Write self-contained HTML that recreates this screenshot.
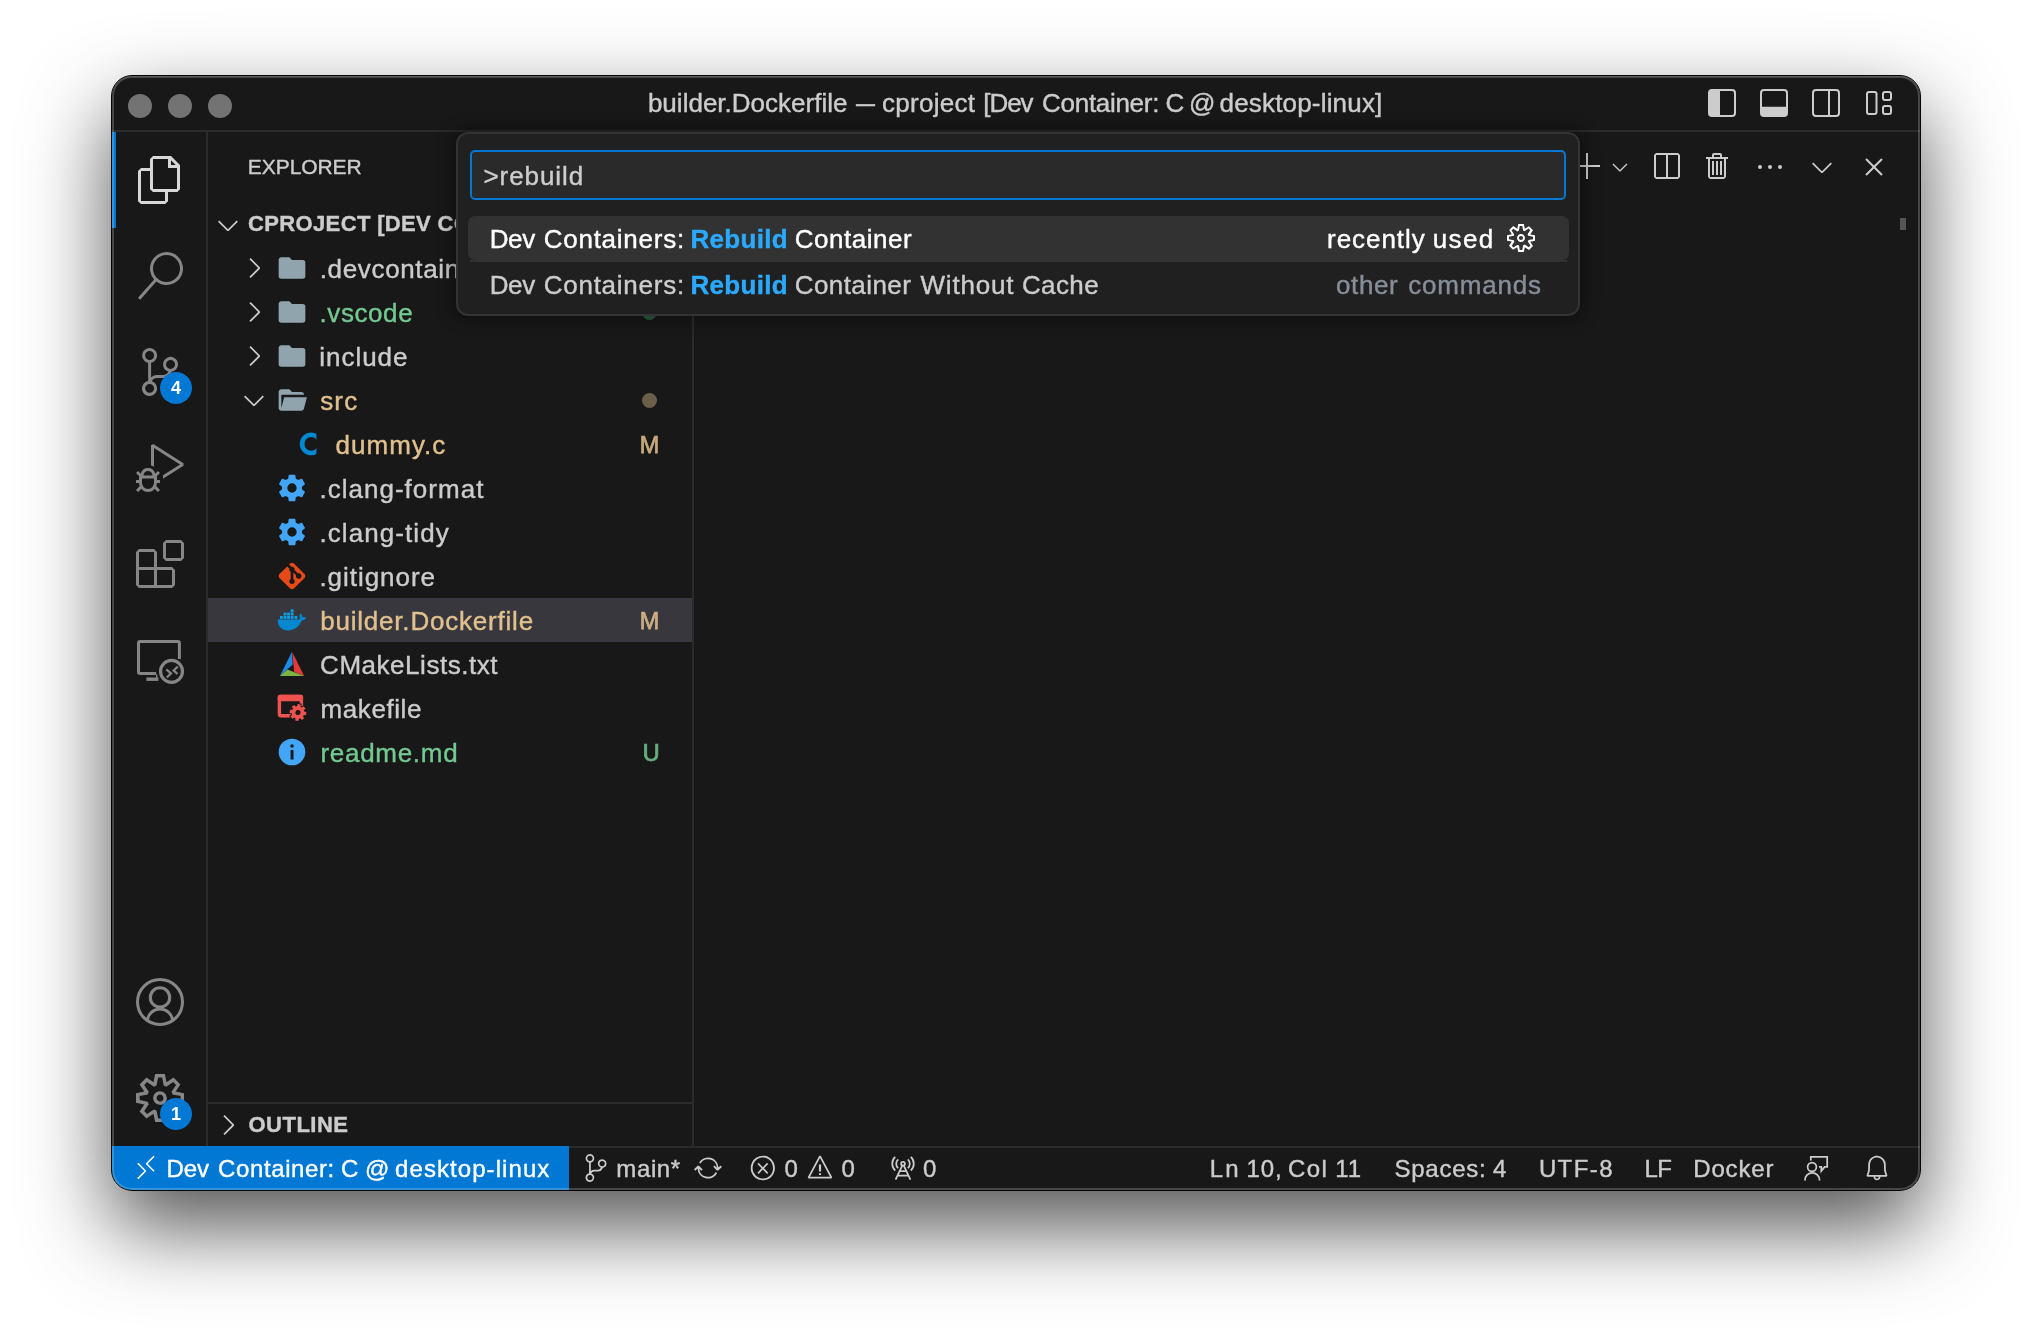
<!DOCTYPE html>
<html lang="en">
<head>
<meta charset="utf-8">
<title>builder.Dockerfile — cproject [Dev Container: C @ desktop-linux]</title>
<style>
html,body{margin:0;padding:0;background:#fff;}
body{width:2032px;height:1338px;position:relative;overflow:hidden;font-family:"Liberation Sans",sans-serif;color:#ccc;-webkit-font-smoothing:antialiased;}
.abs{position:absolute;}
#shadow{position:absolute;left:111px;top:75px;width:1810px;height:1116px;border-radius:21px;
 box-shadow:0 36px 84px rgba(0,0,0,.68);}
#clip{position:absolute;left:112px;top:76px;width:1808px;height:1114px;border-radius:20px;overflow:hidden;background:#181818;}
#page{position:absolute;left:-112px;top:-76px;width:2032px;height:1338px;will-change:transform;}
#frame{position:absolute;left:111px;top:75px;width:1808px;height:1114px;border-radius:21px;border:1px solid #050505;
 box-shadow:inset 0 0 0 2px rgba(255,255,255,.2),inset 0 1px 0 0 rgba(255,255,255,.12);pointer-events:none;}
svg{position:absolute;display:block;overflow:visible;}
.t{position:absolute;white-space:pre;line-height:44px;height:44px;-webkit-text-stroke:.4px;}
/* title bar */
#titlebar{left:112px;top:76px;width:1808px;height:54px;border-bottom:2px solid #2b2b2b;background:#181818;}
.tl{position:absolute;top:94px;width:24px;height:24px;border-radius:50%;background:#737373;}
.tt{top:81px;font-size:26px;color:#ccc;}
/* activity bar */
#actbar{left:112px;top:132px;width:94px;height:1014px;border-right:2px solid #2b2b2b;}
.badge{position:absolute;width:32px;height:32px;border-radius:50%;background:#0078d4;color:#fff;font-weight:700;font-size:18px;line-height:32px;text-align:center;}
/* sidebar */
#sidebar{left:208px;top:132px;width:484px;height:1014px;border-right:2px solid #2b2b2b;}
.row{position:absolute;left:208px;width:484px;height:44px;}
.lbl{font-size:26px;letter-spacing:.55px;margin-top:1px;}
.mod{color:#e2c08d;}
.unt{color:#73c991;}
.dec{position:absolute;font-size:23.4px;line-height:44px;height:44px;width:40px;left:629.600px;text-align:center;margin-top:.8px;-webkit-text-stroke:.75px;opacity:.86;}
.dot{position:absolute;left:642px;width:15px;height:15px;border-radius:50%;}
/* status bar */
#status{left:112px;top:1146px;width:1808px;height:42px;border-top:2px solid #2b2b2b;background:#181818;}
.st{font-size:24px;color:#ccc;top:1146.600px;}
/* quick input */
#qi{left:456px;top:132px;width:1120px;height:180px;border:2px solid #333;border-radius:12px;background:#202020;box-shadow:0 0 16px 4px rgba(0,0,0,.36);}
#qin{left:470px;top:150px;width:1092px;height:46px;border:2px solid #0078d4;border-radius:5px;background:#2a2a2a;}
.q{font-size:26px;}
.hl{color:#2aaaff;font-weight:700;}
</style>
</head>
<body>
<div id="shadow"></div>
<div id="clip"><div id="page">

<!-- TITLE BAR -->
<div id="titlebar" class="abs"></div>
<div class="tl" style="left:128px"></div><div class="tl" style="left:168px"></div><div class="tl" style="left:208px"></div>
<div class="t tt" id="title_1" style="left:647.9px;letter-spacing:0.013px">builder.Dockerfile</div>
<div class="t tt" id="title_2" style="left:856.300px;transform:scaleX(.73);transform-origin:0 0">—</div>
<div class="t tt" id="title_3" style="left:882.1px;letter-spacing:0.272px">cproject</div>
<div class="t tt" id="title_4" style="left:983.3px;letter-spacing:-1.066px">[Dev</div>
<div class="t tt" id="title_5" style="left:1042.1px;letter-spacing:-0.3px">Container:</div>
<div class="t tt" id="title_6" style="left:1165.6px">C</div>
<div class="t tt" id="title_7" style="left:1189.1px;letter-spacing:0px">@</div>
<div class="t tt" id="title_8" style="left:1219.5px;letter-spacing:0.185px">desktop-linux]</div>

<!-- ACTIVITY BAR -->
<div id="actbar" class="abs"></div>
<div class="abs" style="left:112px;top:132px;width:4px;height:96px;background:#0078d4"></div>


<!-- activity icons -->
<svg style="left:136px;top:156px" width="48" height="48" viewBox="0 0 24 24" fill="#d7d7d7"><path d="M17.5 0h-9L7 1.5V6H2.5L1 7.5v15.07L2.5 24h12.07L16 22.57V18h4.7l1.3-1.43V4.5L17.5 0zm0 2.12l2.38 2.38H17.5V2.12zm-3 20.38h-12v-15H7v9.07L8.5 18h6v4.5zm6-6h-12v-15H16V6h4.5v10.5z"/></svg>
<svg style="left:136px;top:252px" width="48" height="48" viewBox="0 0 24 24" fill="#868686"><path d="M15.25 0a8.25 8.25 0 0 0-6.18 13.72L1 22.88l1.12 1 8.05-9.12A8.251 8.251 0 1 0 15.25.01V0zm0 15a6.75 6.75 0 1 1 0-13.5 6.75 6.75 0 0 1 0 13.5z"/></svg>
<svg style="left:136px;top:348px" width="48" height="48" viewBox="0 0 24 24" fill="#868686"><path d="M21.007 8.222A3.738 3.738 0 0 0 15.045 5.2a3.737 3.737 0 0 0 1.156 6.583 2.988 2.988 0 0 1-2.668 1.67h-2.99a4.456 4.456 0 0 0-2.989 1.165V7.4a3.737 3.737 0 1 0-1.494 0v9.117a3.776 3.776 0 1 0 1.816.099 2.99 2.99 0 0 1 2.668-1.667h2.99a4.484 4.484 0 0 0 4.223-3.039 3.736 3.736 0 0 0 3.25-3.687zM4.565 3.738a2.242 2.242 0 1 1 4.484 0 2.242 2.242 0 0 1-4.484 0zm4.484 16.441a2.242 2.242 0 1 1-4.484 0 2.242 2.242 0 0 1 4.484 0zm8.221-9.715a2.242 2.242 0 1 1 0-4.485 2.242 2.242 0 0 1 0 4.485z"/></svg>
<div class="badge" style="left:160px;top:372px">4</div>
<svg style="left:136px;top:444px" width="48" height="48" viewBox="0 0 24 24" fill="#868686"><path d="M10.94 13.5l-1.32 1.32a3.73 3.73 0 0 0-7.24 0L1.06 13.5 0 14.56l1.72 1.72-.22.22V18H0v1.5h1.5v.08c.077.489.214.966.41 1.42L0 22.94 1.06 24l1.65-1.65A4.308 4.308 0 0 0 6 24a4.31 4.31 0 0 0 3.29-1.65L10.94 24 12 22.94 10.09 21c.198-.464.336-.951.41-1.45v-.1H12V18h-1.5v-1.5l-.22-.22L12 14.56l-1.06-1.06zM6 13.5a2.25 2.25 0 0 1 2.25 2.25h-4.5A2.25 2.25 0 0 1 6 13.5zm3 6a3.33 3.33 0 0 1-3 3 3.33 3.33 0 0 1-3-3v-2.25h6v2.25zm14.76-9.9v1.26L13.5 17.37V15.6l8.5-5.37L9 2v9.46a5.07 5.07 0 0 0-1.5-.72V.63L8.64 0l15.12 9.6z"/></svg>
<svg style="left:136px;top:540px" width="48" height="48" viewBox="0 0 24 24" fill="#868686"><path d="M13.5 1.5L15 0h7.5L24 1.5V9l-1.5 1.5H15L13.5 9V1.5zm1.5 0V9h7.5V1.5H15zM0 15V6l1.5-1.5H9L10.5 6v7.5H18l1.5 1.5v7.5L18 24H1.5L0 22.5V15zm9-1.5V6H1.5v7.5H9zM9 15H1.5v7.5H9V15zm1.5 7.5H18V15h-7.5v7.5z"/></svg>
<svg id="ic-remote" style="left:136px;top:636px" width="48" height="48" viewBox="0 0 48 48" fill="none" stroke="#868686" stroke-width="3"><path d="M43.400 23V6.900a1.500 1.500 0 0 0-1.500-1.500H4a1.500 1.500 0 0 0-1.500 1.500V35.900a1.500 1.500 0 0 0 1.500 1.500H20.100"/><path d="M10.400 43.200H22.400" stroke-width="3.400"/><path d="M20.700 38.500V42" stroke-width="1.400"/><circle cx="35.500" cy="35.400" r="10.950" stroke-width="3.200"/><path d="M30.300 33.400L35 37.400L30.800 41.500M41.800 30.600L37.600 34.500L41.500 37.900" stroke-width="2.200"/></svg>
<svg id="ic-account" style="left:136px;top:978px" width="48" height="48" viewBox="0 0 48 48" fill="none" stroke="#868686" stroke-width="3"><circle cx="24" cy="24" r="22.500"/><circle cx="24" cy="19.400" r="9.700" stroke-width="3.100"/><path d="M11.340 42.600A12.700 12.700 0 0 1 36.660 42.600"/></svg>
<svg style="left:136px;top:1074px" width="48" height="48" viewBox="0 0 24 24" fill="#868686"><path fill-rule="evenodd" d="M19.85 8.750l4.150.830v4.840l-4.150.830 2.350 3.520-3.430 3.430-3.520-2.350-.830 4.150H9.580l-.830-4.150-3.520 2.350-3.430-3.430 2.350-3.520L0 14.420V9.580l4.150-.830L1.800 5.230 5.230 1.800l3.520 2.350L9.580 0h4.840l.830 4.150 3.520-2.350 3.430 3.430-2.350 3.520zm-1.570 5.070l4-.810v-2l-4-.810-.540-1.300 2.290-3.430-1.430-1.430-3.430 2.290-1.300-.540-.810-4h-2l-.810 4-1.300.540-3.430-2.290-1.430 1.430L6.380 8.900l-.540 1.300-4 .810v2l4 .810.540 1.300-2.290 3.430 1.430 1.430 3.430-2.290 1.300.540.810 4h2l.810-4 1.300-.540 3.430 2.290 1.430-1.430-2.290-3.430.540-1.300zm-8.186-4.672A3.430 3.430 0 0 1 12 8.570 3.440 3.440 0 0 1 15.430 12a3.430 3.430 0 1 1-5.336-2.852zm.956 4.274c.281.188.612.288.950.288A1.700 1.700 0 0 0 13.710 12a1.710 1.710 0 1 0-2.660 1.422z"/></svg>
<div class="badge" style="left:160px;top:1098px">1</div>

<!-- SIDEBAR -->
<div id="sidebar" class="abs"></div>
<!--SB-->
<div class="t" id="explorer" style="left:247.8px;top:145px;font-size:21px;letter-spacing:-0.064px;color:#ccc">EXPLORER</div>
<svg style="left:212px;top:209px" width="32" height="32" viewBox="0 0 16 16" fill="#ccc"><path d="M7.976 10.072l4.357-4.357.62.618L8.284 11h-.618L3 6.333l.619-.618 4.357 4.357z"/></svg>
<div class="t" id="cproject" style="left:248px;top:202px;font-size:22px;font-weight:700;letter-spacing:.36px;width:208px;overflow:hidden;color:#ccc">CPROJECT [DEV CONTAINER: C @ DESKTOP-LINUX]</div>
<div class="abs" style="left:208px;top:598px;width:484px;height:44px;background:#37373d"></div>
<svg style="left:238px;top:252px" width="32" height="32" viewBox="0 0 16 16" fill="#ccc"><path d="M10.072 8.024L5.715 3.667l.618-.62L11 7.716v.618L6.333 13l-.618-.619 4.357-4.357z"/></svg>
<svg style="left:276px;top:252px" width="32" height="32" viewBox="0 0 24 24"><path fill="#90a4ae" d="M10 4H4c-1.11 0-2 .89-2 2v12a2 2 0 0 0 2 2h16a2 2 0 0 0 2-2V8a2 2 0 0 0-2-2h-8l-2-2z"/></svg>
<div class="t lbl " id="l0" style="left:319.700px;top:246px;letter-spacing:.66px">.devcontainer</div>
<svg style="left:238px;top:296px" width="32" height="32" viewBox="0 0 16 16" fill="#ccc"><path d="M10.072 8.024L5.715 3.667l.618-.62L11 7.716v.618L6.333 13l-.618-.619 4.357-4.357z"/></svg>
<svg style="left:276px;top:296px" width="32" height="32" viewBox="0 0 24 24"><path fill="#90a4ae" d="M10 4H4c-1.11 0-2 .89-2 2v12a2 2 0 0 0 2 2h16a2 2 0 0 0 2-2V8a2 2 0 0 0-2-2h-8l-2-2z"/></svg>
<div class="t lbl unt" id="l1" style="left:319.5px;top:290px;letter-spacing:0.583px">.vscode</div>
<div class="dot" style="top:305px;background:#2f5a40"></div>
<svg style="left:238px;top:340px" width="32" height="32" viewBox="0 0 16 16" fill="#ccc"><path d="M10.072 8.024L5.715 3.667l.618-.62L11 7.716v.618L6.333 13l-.618-.619 4.357-4.357z"/></svg>
<svg style="left:276px;top:340px" width="32" height="32" viewBox="0 0 24 24"><path fill="#90a4ae" d="M10 4H4c-1.11 0-2 .89-2 2v12a2 2 0 0 0 2 2h16a2 2 0 0 0 2-2V8a2 2 0 0 0-2-2h-8l-2-2z"/></svg>
<div class="t lbl " id="l2" style="left:319.2px;top:334px;letter-spacing:0.985px">include</div>
<svg style="left:238px;top:384px" width="32" height="32" viewBox="0 0 16 16" fill="#ccc"><path d="M7.976 10.072l4.357-4.357.62.618L8.284 11h-.618L3 6.333l.619-.618 4.357 4.357z"/></svg>
<svg style="left:276px;top:384px" width="32" height="32" viewBox="0 0 24 24"><path fill="#90a4ae" d="M19 20H4c-1.110 0-2-.9-2-2V6c0-1.110.890-2 2-2h6l2 2h7a2 2 0 0 1 2 2H4v10l2.140-8h17.070l-2.280 8.500c-.230.870-1.010 1.500-1.930 1.500z"/></svg>
<div class="t lbl mod" id="l3" style="left:320.2px;top:378px;letter-spacing:1.15px">src</div>
<div class="dot" style="top:393px;background:#6b5e4a"></div>
<svg style="left:292px;top:428px" width="32" height="32" viewBox="0 0 32 32"><clipPath id="cclip"><rect x="0" y="0" width="24.400" height="32"/></clipPath><circle cx="19.200" cy="15.900" r="9.100" fill="none" stroke="#0288d1" stroke-width="4.600" clip-path="url(#cclip)"/></svg>
<div class="t lbl mod" id="l4" style="left:335.4px;top:422px;letter-spacing:1.066px">dummy.c</div>
<div class="dec mod" id="d4" style="top:422px">M</div>
<svg style="left:276px;top:472px" width="32" height="32" viewBox="0 0 24 24"><path fill="#42a5f5" d="M12 15.500A3.500 3.500 0 0 1 8.500 12 3.500 3.500 0 0 1 12 8.500a3.500 3.500 0 0 1 3.500 3.500 3.500 3.500 0 0 1-3.500 3.500m7.430-2.530c.040-.320.070-.640.070-.970 0-.330-.030-.660-.070-1l2.110-1.630c.190-.150.240-.420.120-.640l-2-3.460c-.120-.220-.390-.310-.610-.220l-2.490 1c-.520-.390-1.060-.730-1.690-.980l-.370-2.650A.506.506 0 0 0 14 2h-4c-.250 0-.460.180-.500.420l-.370 2.650c-.630.250-1.170.590-1.690.980l-2.490-1c-.220-.090-.490 0-.610.220l-2 3.460c-.130.220-.070.490.120.640L4.570 11c-.040.340-.070.670-.070 1 0 .330.030.650.070.970l-2.110 1.660c-.190.150-.250.420-.120.640l2 3.460c.120.220.390.300.610.220l2.490-1.010c.520.400 1.060.740 1.690.990l.370 2.650c.040.240.250.420.500.420h4c.250 0 .460-.180.500-.420l.370-2.650c.630-.260 1.170-.590 1.690-.990l2.490 1.010c.220.080.490 0 .610-.220l2-3.460c.120-.220.070-.490-.120-.640l-2.110-1.660z"/></svg>
<div class="t lbl " id="l5" style="left:319.4px;top:466px;letter-spacing:1.024px">.clang-format</div>
<svg style="left:276px;top:516px" width="32" height="32" viewBox="0 0 24 24"><path fill="#42a5f5" d="M12 15.500A3.500 3.500 0 0 1 8.500 12 3.500 3.500 0 0 1 12 8.500a3.500 3.500 0 0 1 3.500 3.500 3.500 3.500 0 0 1-3.500 3.500m7.430-2.530c.040-.320.070-.640.070-.970 0-.330-.030-.660-.070-1l2.110-1.630c.190-.150.240-.420.120-.640l-2-3.460c-.120-.220-.390-.310-.610-.220l-2.490 1c-.520-.390-1.060-.730-1.690-.980l-.370-2.650A.506.506 0 0 0 14 2h-4c-.250 0-.460.180-.500.420l-.370 2.650c-.630.250-1.170.590-1.690.980l-2.490-1c-.220-.090-.490 0-.610.220l-2 3.460c-.130.220-.070.490.120.640L4.570 11c-.040.340-.070.670-.070 1 0 .330.030.650.070.970l-2.110 1.660c-.190.150-.250.420-.120.640l2 3.460c.120.220.390.300.610.220l2.490-1.010c.520.400 1.060.740 1.690.990l.370 2.650c.040.240.250.420.500.420h4c.250 0 .460-.180.500-.420l.370-2.650c.630-.260 1.170-.590 1.690-.990l2.490 1.010c.220.080.490 0 .610-.220l2-3.460c.120-.220.070-.490-.120-.640l-2.110-1.660z"/></svg>
<div class="t lbl " id="l6" style="left:319.4px;top:510px;letter-spacing:1.09px">.clang-tidy</div>
<svg style="left:276px;top:560px" width="32" height="32" viewBox="0 0 24 24"><path fill="#e64a19" d="M2.600 10.590L8.380 4.800l1.690 1.700c-.240.850.150 1.780.930 2.230v5.540c-.600.340-1 .990-1 1.730a2 2 0 0 0 2 2 2 2 0 0 0 2-2c0-.740-.400-1.390-1-1.730V9.410l2.070 2.090c-.070.150-.070.320-.070.500a2 2 0 0 0 2 2 2 2 0 0 0 2-2 2 2 0 0 0-2-2c-.180 0-.350 0-.500.070L13.930 7.500a1.980 1.980 0 0 0-1.150-2.340c-.430-.160-.880-.200-1.280-.090L9.800 3.380l.790-.780c.780-.790 2.040-.790 2.820 0l7.990 7.990c.790.780.790 2.040 0 2.820l-7.990 7.990c-.780.790-2.040.790-2.820 0L2.600 13.410c-.790-.780-.790-2.040 0-2.820z"/></svg>
<div class="t lbl " id="l7" style="left:319.4px;top:554px;letter-spacing:0.965px">.gitignore</div>
<svg style="left:276px;top:604px" width="32" height="32" viewBox="0 0 32 32"><path fill="#0288d1" d="M1.700 15.500H23C24.200 15.300 24.200 13.500 23.500 12.200C23.300 11 24 9.900 24.600 9.500C25.600 10.400 26.300 11.800 26.400 13.100C27.600 12.900 29.200 13.100 30.100 13.800C29.500 15.400 28 16.500 25.600 16.600C23.800 22 18.900 26.500 12 26.500C5.500 26.500 1.700 22.500 1.700 15.500Z"/><g fill="#0a9fe6"><rect x="4.000" y="12.000" width="2.900" height="2.900"/><rect x="7.600" y="12.000" width="2.900" height="2.900"/><rect x="11.100" y="12.000" width="2.900" height="2.900"/><rect x="14.700" y="12.000" width="2.900" height="2.900"/><rect x="18.500" y="12.000" width="2.900" height="2.900"/><rect x="7.600" y="8.600" width="2.900" height="2.900"/><rect x="11.100" y="8.600" width="2.900" height="2.900"/><rect x="14.700" y="8.600" width="2.900" height="2.900"/><rect x="14.700" y="5.300" width="2.900" height="2.900"/></g></svg>
<div class="t lbl mod" id="l8" style="left:320.2px;top:598px;letter-spacing:0.794px">builder.Dockerfile</div>
<div class="dec mod" id="d8" style="top:598px">M</div>
<svg style="left:276px;top:648px" width="32" height="32" viewBox="0 0 32 32"><path fill="#1e88e5" d="M15.900 3.900L3.900 28L16.800 16.600Z"/><path fill="#e53935" d="M16.300 3.900L28.100 28L18.100 23.700Z"/><path fill="#7cb342" d="M3.900 28H28.100L11.500 21.400Z"/></svg>
<div class="t lbl " id="l9" style="left:320.1px;top:642px;letter-spacing:0.533px">CMakeLists.txt</div>
<svg style="left:276px;top:692px" width="32" height="32" viewBox="0 0 32 32"><rect x="3.400" y="4.400" width="22" height="19.300" rx="1.500" fill="none" stroke="#ef5350" stroke-width="3.400"/><rect x="1.700" y="2.700" width="25.400" height="6.500" rx="2" fill="#ef5350"/><g transform="translate(22 20.500) rotate(8)"><g fill="#181818" stroke="#181818" stroke-width="1.800"><circle r="6.300"/><rect x="-1.600" y="-8.300" width="3.200" height="3.400" transform="rotate(0)"/><rect x="-1.600" y="-8.300" width="3.200" height="3.400" transform="rotate(45)"/><rect x="-1.600" y="-8.300" width="3.200" height="3.400" transform="rotate(90)"/><rect x="-1.600" y="-8.300" width="3.200" height="3.400" transform="rotate(135)"/><rect x="-1.600" y="-8.300" width="3.200" height="3.400" transform="rotate(180)"/><rect x="-1.600" y="-8.300" width="3.200" height="3.400" transform="rotate(225)"/><rect x="-1.600" y="-8.300" width="3.200" height="3.400" transform="rotate(270)"/><rect x="-1.600" y="-8.300" width="3.200" height="3.400" transform="rotate(315)"/></g><g fill="#ef5350" stroke="#ef5350"><circle r="4.450" fill="none" stroke-width="3.700"/><rect stroke="none" x="-1.600" y="-8.300" width="3.200" height="3.400" transform="rotate(0)"/><rect stroke="none" x="-1.600" y="-8.300" width="3.200" height="3.400" transform="rotate(45)"/><rect stroke="none" x="-1.600" y="-8.300" width="3.200" height="3.400" transform="rotate(90)"/><rect stroke="none" x="-1.600" y="-8.300" width="3.200" height="3.400" transform="rotate(135)"/><rect stroke="none" x="-1.600" y="-8.300" width="3.200" height="3.400" transform="rotate(180)"/><rect stroke="none" x="-1.600" y="-8.300" width="3.200" height="3.400" transform="rotate(225)"/><rect stroke="none" x="-1.600" y="-8.300" width="3.200" height="3.400" transform="rotate(270)"/><rect stroke="none" x="-1.600" y="-8.300" width="3.200" height="3.400" transform="rotate(315)"/></g></g></svg>
<div class="t lbl " id="l10" style="left:320.5px;top:686px;letter-spacing:0.588px">makefile</div>
<svg style="left:276px;top:736px" width="32" height="32" viewBox="0 0 32 32"><circle cx="16" cy="16" r="13.300" fill="#42a5f5"/><rect x="14.600" y="14" width="2.900" height="9.500" fill="#181818"/><circle cx="16.050" cy="9.900" r="1.750" fill="#181818"/></svg>
<div class="t lbl unt" id="l11" style="left:320.5px;top:730px;letter-spacing:0.7px">readme.md</div>
<div class="dec unt" id="d11" style="top:730px;left:631.300px">U</div>
<div class="abs" style="left:208px;top:1102px;width:484px;height:2px;background:#2b2b2b"></div>
<svg style="left:212px;top:1109px" width="32" height="32" viewBox="0 0 16 16" fill="#ccc"><path d="M10.072 8.024L5.715 3.667l.618-.62L11 7.716v.618L6.333 13l-.618-.619 4.357-4.357z"/></svg>
<div class="t" id="outline" style="left:248.4px;top:1103px;font-size:22px;font-weight:700;color:#ccc;letter-spacing:0.516px">OUTLINE</div>
<!--/SB-->

<!--PANEL-->
<svg style="left:1708px;top:89px" width="28" height="28" viewBox="0 0 28 28"><rect x="1" y="1" width="26" height="26" rx="3" fill="none" stroke="#ccc" stroke-width="2"/><path d="M4 1h8v26H4a3 3 0 0 1-3-3V4a3 3 0 0 1 3-3z" fill="#ccc"/></svg>
<svg style="left:1760px;top:89px" width="28" height="28" viewBox="0 0 28 28"><rect x="1" y="1" width="26" height="26" rx="3" fill="none" stroke="#ccc" stroke-width="2"/><path d="M1 17.800h26V24a3 3 0 0 1-3 3H4a3 3 0 0 1-3-3z" fill="#ccc"/></svg>
<svg style="left:1812px;top:89px" width="28" height="28" viewBox="0 0 28 28"><rect x="1" y="1" width="26" height="26" rx="3" fill="none" stroke="#ccc" stroke-width="2"/><path d="M17 1v26" stroke="#ccc" stroke-width="2"/></svg>
<svg style="left:1864px;top:89px" width="30" height="28" viewBox="0 0 30 28" fill="none" stroke="#ccc" stroke-width="2"><rect x="3" y="3" width="9.500" height="22" rx="2"/><rect x="19" y="3" width="8" height="8" rx="2"/><rect x="19" y="17" width="8" height="8" rx="2"/></svg>
<svg style="left:1572px;top:151px" width="32" height="32" viewBox="0 0 16 16" fill="#ccc"><path d="M14 7v1H8v6H7V8H1V7h6V1h1v6h6z"/></svg>
<svg style="left:1608px;top:155px" width="24" height="24" viewBox="0 0 16 16" fill="#ccc"><path d="M7.976 10.072l4.357-4.357.62.618L8.284 11h-.618L3 6.333l.619-.618 4.357 4.357z"/></svg>
<svg style="left:1650px;top:151px" width="32" height="32" viewBox="0 0 16 16" fill="#ccc"><path d="M14 1H3L2 2v11l1 1h11l1-1V2l-1-1zM8 13H3V2h5v11zm6 0H9V2h5v11z"/></svg>
<svg style="left:1702px;top:151px" width="32" height="32" viewBox="0 0 16 16" fill="#ccc"><path d="M10 3h3v1h-1v9l-1 1H4l-1-1V4H2V3h3V2a1 1 0 0 1 1-1h3a1 1 0 0 1 1 1v1zM9 2H6v1h3V2zM4 13h7V4H4v9zm2-8H5v7h1V5zm1 0h1v7H7V5zm2 0h1v7H9V5z"/></svg>
<svg style="left:1754px;top:151px" width="32" height="32" viewBox="0 0 16 16" fill="#ccc"><path d="M4 8a1 1 0 1 1-2 0 1 1 0 0 1 2 0zm5 0a1 1 0 1 1-2 0 1 1 0 0 1 2 0zm5 0a1 1 0 1 1-2 0 1 1 0 0 1 2 0z"/></svg>
<svg style="left:1806px;top:151px" width="32" height="32" viewBox="0 0 16 16" fill="#ccc"><path d="M7.976 10.072l4.357-4.357.62.618L8.284 11h-.618L3 6.333l.619-.618 4.357 4.357z"/></svg>
<svg style="left:1858px;top:151px" width="32" height="32" viewBox="0 0 16 16" fill="#ccc"><path d="M8 8.707l3.646 3.647.708-.707L8.707 8l3.647-3.646-.707-.708L8 7.293 4.354 3.646l-.707.708L7.293 8l-3.646 3.646.707.708L8 8.707z"/></svg>
<div class="abs" style="left:1900px;top:218px;width:6px;height:12px;background:#555"></div>
<!--/PANEL-->

<!-- STATUS BAR -->
<div id="status" class="abs"></div>
<!--ST-->
<div class="abs" style="left:112px;top:1146px;width:457px;height:44px;background:#0078d4"></div>
<svg style="left:131.75px;top:1154.25px" width="28" height="28" viewBox="0 0 16 16" fill="#fff"><path d="M12.904 9.570L8.928 5.596l3.976-3.976-.619-.620L8 5.286v.619l4.285 4.285.620-.618zM3 5.620l4.072 4.070L3 13.763l.619.618L8 10v-.619L3.619 5 3 5.619z"/></svg>
<div class="t st" id="s_remote_1" style="left:166.4px;color:#fff;letter-spacing:0px">Dev</div>
<div class="t st" id="s_remote_2" style="left:218.1px;color:#fff;letter-spacing:0.6px">Container:</div>
<div class="t st" id="s_remote_3" style="left:341.1px;color:#fff;letter-spacing:0px">C</div>
<div class="t st" id="s_remote_4" style="left:364.9px;color:#fff;letter-spacing:0px">@</div>
<div class="t st" id="s_remote_5" style="left:395.1px;color:#fff;letter-spacing:1.067px">desktop-linux</div>
<svg style="left:581.5px;top:1154.2px" width="28" height="28" viewBox="0 0 24 24" fill="#ccc"><path d="M21.007 8.222A3.738 3.738 0 0 0 15.045 5.200a3.737 3.737 0 0 0 1.156 6.583 2.988 2.988 0 0 1-2.668 1.670h-2.990a4.456 4.456 0 0 0-2.989 1.165V7.400a3.737 3.737 0 1 0-1.494 0v9.117a3.776 3.776 0 1 0 1.816.099 2.990 2.990 0 0 1 2.668-1.667h2.990a4.484 4.484 0 0 0 4.223-3.039 3.736 3.736 0 0 0 3.250-3.687zM4.565 3.738a2.242 2.242 0 1 1 4.484 0 2.242 2.242 0 0 1-4.484 0zm4.484 16.441a2.242 2.242 0 1 1-4.484 0 2.242 2.242 0 0 1 4.484 0zm8.221-9.715a2.242 2.242 0 1 1 0-4.485 2.242 2.242 0 0 1 0 4.485z"/></svg>
<div class="t st" id="s_main" style="left:616.3px;letter-spacing:0.625px">main*</div>
<svg style="left:694px;top:1154px" width="28" height="28" viewBox="0 0 16 16" fill="#ccc"><path d="M2.006 8.267L.780 9.500 0 8.730l2.090-2.070.760.010 2.090 2.120-.760.760-1.167-1.180a5 5 0 0 0 9.400 1.983l.813.597a6 6 0 0 1-11.220-2.683zm10.990-.466L11.760 6.550l-.760.760 2.090 2.110.760.010 2.090-2.070-.750-.760-1.194 1.180a6 6 0 0 0-11.110-2.920l.810.594a5 5 0 0 1 9.300 2.346z"/></svg>
<svg style="left:749.3px;top:1153.8px" width="28" height="28" viewBox="0 0 16 16" fill="#ccc"><path d="M8.600 1c1.600.100 3.100.900 4.200 2 1.300 1.400 2 3.100 2 5.100 0 1.600-.600 3.100-1.600 4.400-1 1.200-2.400 2.100-4 2.400-1.600.300-3.200.100-4.600-.700-1.400-.800-2.500-2-3.100-3.500C.900 9.200.800 7.500 1.300 6c.500-1.600 1.400-2.900 2.800-3.800C5.400 1.300 7 .900 8.600 1zm.500 12.900c1.300-.300 2.500-1 3.400-2.100.800-1.100 1.300-2.400 1.200-3.800 0-1.600-.600-3.200-1.700-4.300-1-1-2.200-1.600-3.600-1.700-1.300-.100-2.700.200-3.800 1-1.100.800-1.900 1.900-2.300 3.300-.400 1.300-.400 2.700.200 4 .600 1.300 1.500 2.300 2.700 3 1.200.700 2.600.900 3.900.600zM7.900 7.500L10.300 5l.700.700-2.400 2.500 2.400 2.500-.700.700-2.400-2.500-2.400 2.500-.700-.700 2.400-2.500-2.400-2.500.700-.700 2.400 2.500z"/></svg>
<div class="t st" id="s_e0" style="left:784.5px;letter-spacing:0px">0</div>
<svg style="left:806.25px;top:1154px" width="28" height="28" viewBox="0 0 16 16" fill="#ccc"><path d="M7.560 1h.880l6.540 12.260-.440.740H1.440L1 13.260 7.560 1zM8 2.280L2.280 13H13.700L8 2.280zM8.625 12v-1h-1.250v1h1.250zm-1.250-2V6h1.250v4h-1.250z"/></svg>
<div class="t st" id="s_w0" style="left:841.6px;letter-spacing:0px">0</div>
<svg id="ic-radio" style="left:889px;top:1154px" width="28" height="28" viewBox="0 0 28 28" fill="none" stroke="#ccc" stroke-width="1.750"><path d="M6.200 2.900a9.300 9.300 0 0 0 0 13.600M21.800 2.900a9.300 9.300 0 0 1 0 13.600M9.200 5.300a5.800 5.800 0 0 0 0 8.800M18.800 5.300a5.800 5.800 0 0 1 0 8.800"/><circle cx="14" cy="9.700" r="1.900"/><path d="M13.200 11.600L6.600 25.600M14.800 11.600L21.400 25.600M10.700 17h6.600M8.600 21.500h10.800"/></svg>
<div class="t st" id="s_p0" style="left:923px">0</div>
<div class="t st" id="s_ln_1" style="left:1209.7px;letter-spacing:2.1px">Ln</div>
<div class="t st" id="s_ln_2" style="left:1246.5px;letter-spacing:0.95px">10,</div>
<div class="t st" id="s_ln_3" style="left:1288.1px;letter-spacing:1.4px">Col</div>
<div class="t st" id="s_ln_4" style="left:1335.3px;letter-spacing:0.8px">11</div>
<div class="t st" id="s_sp_1" style="left:1394.5px;letter-spacing:0.75px">Spaces:</div>
<div class="t st" id="s_sp_2" style="left:1492.9px;letter-spacing:0px">4</div>
<div class="t st" id="s_utf" style="left:1538.9px;letter-spacing:1.4px">UTF-8</div>
<div class="t st" id="s_lf" style="left:1644.4px;letter-spacing:-0.6px">LF</div>
<div class="t st" id="s_dk" style="left:1693.2px;letter-spacing:0.86px">Docker</div>
<svg id="ic-feedback" style="left:1800px;top:1150px" width="32" height="36" viewBox="1800 1150 32 36" fill="none" stroke="#ccc" stroke-width="1.750"><circle cx="1812" cy="1167" r="4.400"/><path d="M1805 1180.600v-.600a7.250 7.250 0 0 1 14.500 0v.600"/><path d="M1810.800 1160.400V1156.800H1827.200V1166.900H1824.600L1821.300 1171V1166.900H1819"/></svg>
<svg style="left:1862.5px;top:1154px" width="28" height="28" viewBox="0 0 16 16" fill="#ccc"><path d="M13.377 10.573a7.630 7.630 0 0 1-.383-2.380V6.195a5.115 5.115 0 0 0-1.268-3.446 5.138 5.138 0 0 0-3.242-1.722c-.694-.072-1.400 0-2.070.227-.670.215-1.280.574-1.794 1.053a4.923 4.923 0 0 0-1.208 1.675 5.067 5.067 0 0 0-.431 2.022v2.200a7.610 7.610 0 0 1-.383 2.370L2 12.343l.479.658h3.505c0 .526.215 1.040.586 1.412.370.370.885.586 1.412.586.526 0 1.040-.215 1.411-.586s.587-.886.587-1.412h3.505l.478-.658-.586-1.770zm-4.690 3.147a.997.997 0 0 1-.705.299.997.997 0 0 1-.706-.300.997.997 0 0 1-.300-.705h1.999a.939.939 0 0 1-.287.706zm-5.515-1.710l.371-1.114a8.633 8.633 0 0 0 .443-2.691V6.004c0-.563.120-1.113.347-1.616.227-.514.550-.969.969-1.340.419-.382.910-.670 1.436-.837.538-.180 1.100-.240 1.650-.180a4.147 4.147 0 0 1 2.597 1.400 4.133 4.133 0 0 1 1.004 2.776v2.010c0 .909.144 1.818.443 2.691l.371 1.113h-9.630v-.012z"/></svg>
<!--/ST-->

<!-- QUICK INPUT -->
<div id="qi" class="abs"></div>
<div id="qin" class="abs"></div>
<!--QI-->
<div class="t q" id="qtext" style="left:483.5px;top:154px;color:#ccc;letter-spacing:0.916px">&gt;rebuild</div>
<div class="abs" id="qsel" style="left:468px;top:216px;width:1101px;height:44px;border-radius:7px;background:#323232"></div>
<div class="t q" id="q1a_1" style="left:489.7px;top:217px;color:#fff;letter-spacing:-0.35px">Dev</div>
<div class="t q" id="q1a_2" style="left:543.7px;top:217px;color:#fff;letter-spacing:0.75px">Containers:</div><div class="t q hl" id="q1b" style="left:690.4px;top:217px;letter-spacing:0.333px">Rebuild</div><div class="t q" id="q1c" style="left:794.8px;top:217px;color:#fff;letter-spacing:0.512px">Container</div>
<div class="abs" style="left:470px;top:260px;width:1097px;height:2px;background:#323232"></div>
<div class="t q" id="q2a_1" style="left:489.7px;top:263px;color:#ccc;letter-spacing:-0.35px">Dev</div>
<div class="t q" id="q2a_2" style="left:543.7px;top:263px;color:#ccc;letter-spacing:0.75px">Containers:</div><div class="t q hl" id="q2b" style="left:690.4px;top:263px;letter-spacing:0.333px">Rebuild</div><div class="t q" id="q2c_1" style="left:794.7px;top:263px;color:#ccc;letter-spacing:0.438px">Container</div>
<div class="t q" id="q2c_2" style="left:920.5px;top:263px;color:#ccc;letter-spacing:0.816px">Without</div>
<div class="t q" id="q2c_3" style="left:1021.9px;top:263px;color:#ccc;letter-spacing:0.4px">Cache</div>
<div class="t q" id="q1r_1" style="left:1327.1px;top:217px;color:#fff;letter-spacing:0.928px">recently</div>
<div class="t q" id="q1r_2" style="left:1432.7px;top:217px;color:#fff;letter-spacing:1.4px">used</div>
<div class="t q" id="q2r_1" style="left:1336.1px;top:263px;color:#868e99;letter-spacing:0.55px">other</div>
<div class="t q" id="q2r_2" style="left:1408.3px;top:263px;color:#868e99;letter-spacing:0.786px">commands</div>
<svg style="left:1505px;top:222px" width="32" height="32" viewBox="0 0 16 16" fill="#fff"><path d="M9.100 4.400L8.600 2H7.400l-.500 2.400-.700.300-2-1.300-.900.800 1.300 2-.200.700-2.400.500v1.200l2.400.500.300.800-1.300 2 .800.800 2-1.300.800.300.400 2.300h1.200l.500-2.400.800-.300 2 1.300.800-.800-1.300-2 .300-.800 2.300-.400V7.400l-2.400-.500-.300-.800 1.300-2-.800-.800-2 1.300-.700-.200zM9.400 1l.500 2.400L12 2.100l2 2-1.400 2.100 2.400.400v2.800l-2.400.500L14 12l-2 2-2.100-1.400-.500 2.400H6.600l-.500-2.400L4 13.900l-2-2 1.400-2.100L1 9.400V6.600l2.400-.500L2.100 4l2-2 2.100 1.400.400-2.400h2.800zm.600 7c0 1.100-.900 2-2 2s-2-.900-2-2 .900-2 2-2 2 .900 2 2zM8 9c.600 0 1-.400 1-1s-.400-1-1-1-1 .400-1 1 .400 1 1 1z"/></svg>
<!--/QI-->

</div></div>
<div id="frame"></div>
</body>
</html>
